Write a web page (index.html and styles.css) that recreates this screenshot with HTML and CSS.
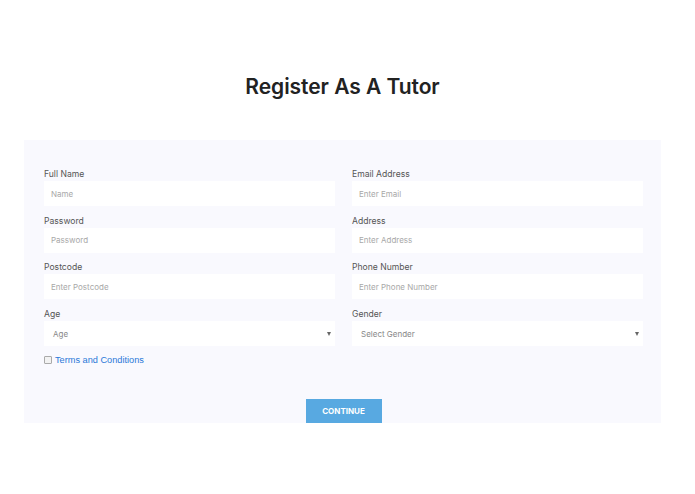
FILE: index.html
```html
<!DOCTYPE html>
<html>
<head>
<meta charset="utf-8">
<link rel="stylesheet" href="styles.css">
</head>
<body>
<main class="page">
<h1 class="title">Register As A Tutor</h1>
<form class="card">
  <div class="grid">
    <div class="field">
      <label class="label">Full Name</label>
      <div class="input">Name</div>
    </div>
    <div class="field">
      <label class="label">Email Address</label>
      <div class="input">Enter Email</div>
    </div>
    <div class="field">
      <label class="label">Password</label>
      <div class="input">Password</div>
    </div>
    <div class="field">
      <label class="label">Address</label>
      <div class="input">Enter Address</div>
    </div>
    <div class="field">
      <label class="label">Postcode</label>
      <div class="input">Enter Postcode</div>
    </div>
    <div class="field">
      <label class="label">Phone Number</label>
      <div class="input">Enter Phone Number</div>
    </div>
    <div class="field">
      <label class="label">Age</label>
      <div class="input select"><span>Age</span><span class="caret"></span></div>
    </div>
    <div class="field">
      <label class="label">Gender</label>
      <div class="input select"><span>Select Gender</span><span class="caret"></span></div>
    </div>
  </div>
  <div class="terms"><span class="check"></span><a class="link">Terms and Conditions</a></div>
  <div class="actions"><button type="button" class="btn">CONTINUE</button></div>
</form>
</main>
</body>
</html>
```
FILE: styles.css
```css
html, body { margin: 0; padding: 0; background: #fff; }
body { font-family: Inter, "Open Sans", sans-serif; color: #333; }
.page { margin-left: 24px; width: 637px; }
.title {
  margin: 0;
  padding-top: 74px;
  text-align: center;
  font-size: 21px;
  font-weight: 600;
  color: #222;
  line-height: 26px;
  letter-spacing: -0.05px;
}
.card {
  margin-top: 40px;
  height: 283px;
  box-sizing: border-box;
  background: #f9f9fe;
  padding: 29px 18px 0 20px;
  display: flex;
  flex-direction: column;
}
.grid {
  display: grid;
  grid-template-columns: 291px 291px;
  column-gap: 17px;
  row-gap: 9.7px;
}
.field { display: flex; flex-direction: column; }
.label {
  font-size: 8.6px;
  line-height: 11px;
  color: #555;
  font-weight: 400;
  margin-bottom: 1px;
}
.input {
  height: 25px;
  background: #fff;
  font-size: 8px;
  color: #a8a8a8;
  padding-left: 7px;
  display: flex;
  align-items: center;
}
.select { justify-content: space-between; padding-left: 9px; padding-right: 4px; color: #888; }
.caret {
  width: 0; height: 0;
  border-left: 2.5px solid transparent;
  border-right: 2.5px solid transparent;
  border-top: 4px solid #666;
}
.terms {
  display: flex;
  align-items: center;
  margin-top: 8px;
  height: 12px;
}
.check {
  width: 6px; height: 6px;
  border: 1px solid #aaa;
  border-radius: 1px;
  background: #f2f2f2;
  margin-right: 3px;
}
.link {
  font-family: "Liberation Sans", Arial, sans-serif;
  font-size: 9.2px;
  color: #2a78d8;
}
.actions {
  margin-top: auto;
  display: flex;
  justify-content: center;
}
.btn {
  width: 76px;
  height: 24px;
  border: 0;
  background: #58a9e1;
  color: #fff;
  font-family: Inter, sans-serif;
  font-weight: 700;
  font-size: 8px;
  padding: 0;
}
```
